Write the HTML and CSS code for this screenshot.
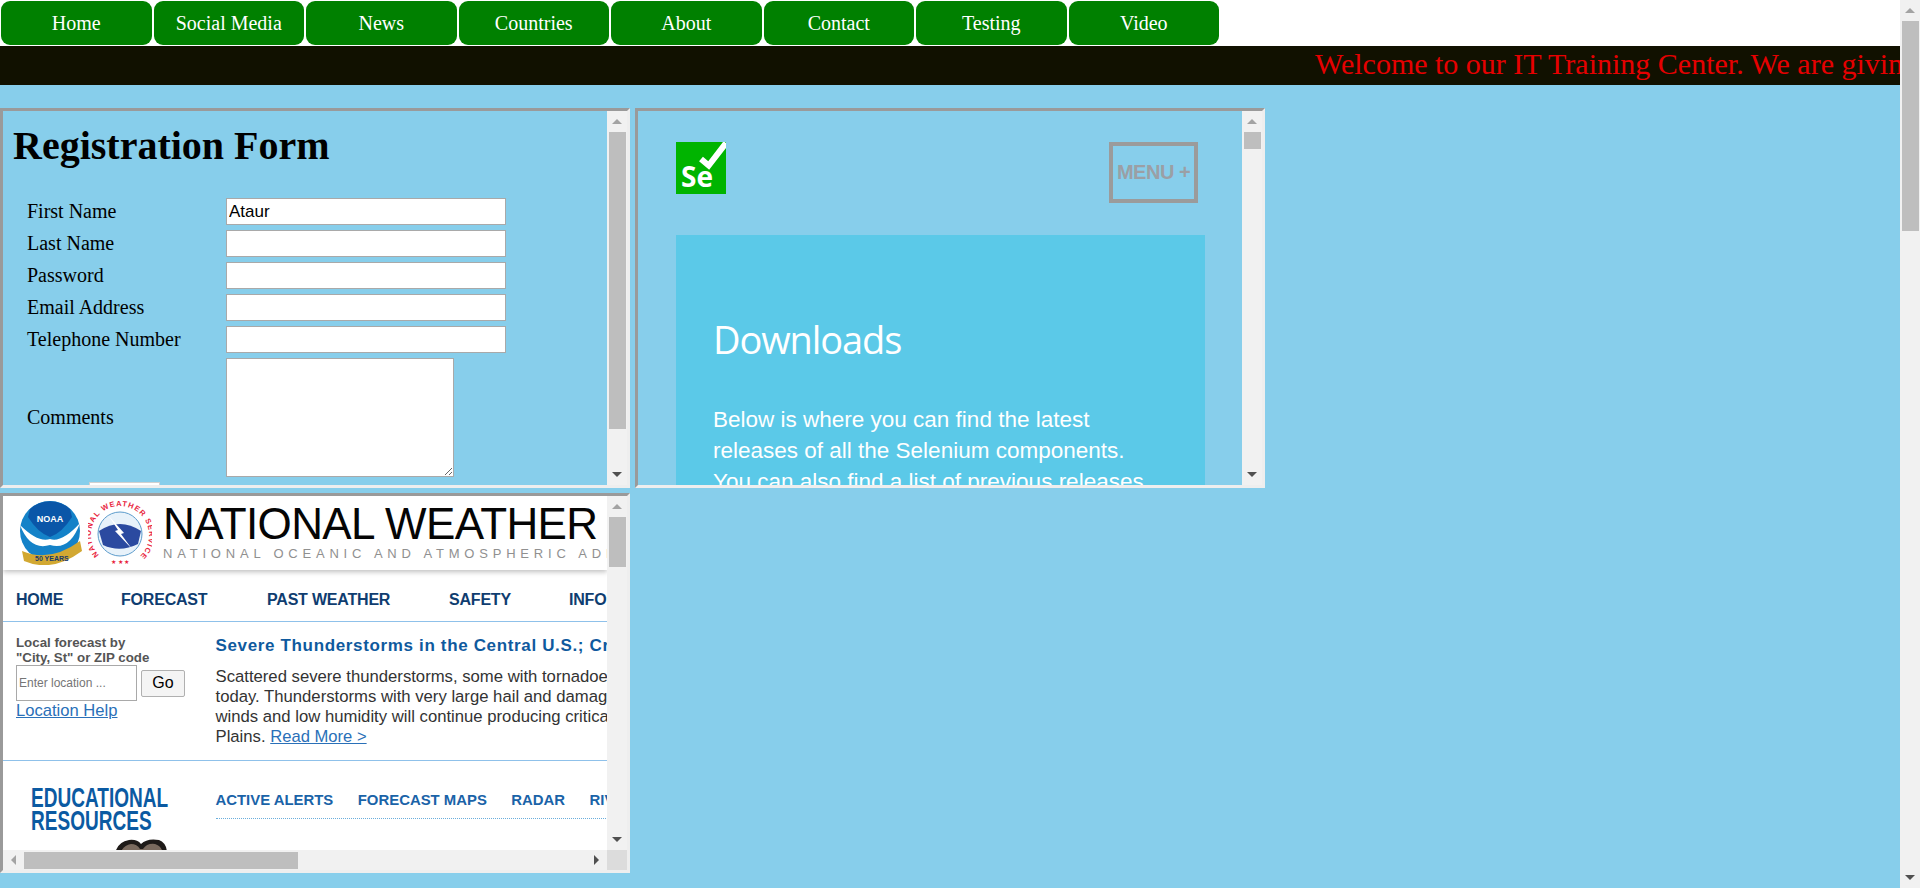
FILE: index.html
```html
<!DOCTYPE html>
<html>
<head>
    <title>IT Training Center</title>
    <link rel="stylesheet" href="styles.css">
</head>
<body>
    <div class="page">
        <ul class="nav">
            <li class="nav-item">Home</li>
            <li class="nav-item">Social Media</li>
            <li class="nav-item">News</li>
            <li class="nav-item">Countries</li>
            <li class="nav-item">About</li>
            <li class="nav-item">Contact</li>
            <li class="nav-item">Testing</li>
            <li class="nav-item">Video</li>
        </ul>
        <div class="ticker">
            <span class="ticker-text">Welcome to our IT Training Center. We are giving best training</span>
        </div>

        <div class="frames">
            <!-- registration form -->
            <div class="frame">
                <div class="frame-body form-doc">
                    <h1>Registration Form</h1>
                    <div class="form-grid">
                        <label>First Name</label>
                        <input class="field" type="text" value="Ataur">
                        <label>Last Name</label>
                        <input class="field" type="text">
                        <label>Password</label>
                        <input class="field" type="text">
                        <label>Email Address</label>
                        <input class="field" type="text">
                        <label>Telephone Number</label>
                        <input class="field" type="text">
                        <label>Comments</label>
                        <textarea class="comments"></textarea>
                    </div>
                    <div class="submit-stub"></div>
                </div>
                <div class="vbar">
                    <div class="arrow-box"><span class="arrow-up"></span></div>
                    <div class="thumb thumb-form"></div>
                    <div class="track"></div>
                    <div class="arrow-box"><span class="arrow-down"></span></div>
                </div>
            </div>

            <!-- selenium downloads -->
            <div class="frame">
                <div class="frame-body sel-doc">
                    <div class="sel-head">
                        <svg class="sel-logo" width="50" height="52" viewBox="0 0 50 52">
                            <rect width="50" height="52" fill="#00b400"/>
                            <path d="M25 17 L32.7 23.5 L50 1" fill="none" stroke="#fff" stroke-width="6"/>
                            <text x="5" y="45" class="sel-logo-text">Se</text>
                        </svg>
                        <div class="sel-menu">MENU +</div>
                    </div>
                    <div class="sel-box">
                        <h2>Downloads</h2>
                        <p>Below is where you can find the latest releases of all the Selenium components. You can also find a list of previous releases, source code, and additional information for Maven users.</p>
                    </div>
                </div>
                <div class="vbar">
                    <div class="arrow-box"><span class="arrow-up"></span></div>
                    <div class="thumb thumb-sel"></div>
                    <div class="track"></div>
                    <div class="arrow-box"><span class="arrow-down"></span></div>
                </div>
            </div>

            <!-- weather site -->
            <div class="frame frame-both">
                <div class="frame-body nws-doc">
                    <div class="nws-banner">
                        <svg class="nws-logo" width="64" height="64" viewBox="0 0 64 64">
                            <circle cx="30" cy="30" r="30" fill="#1482c8"/>
                            <path d="M10 8 A30 30 0 0 1 50 8 L52 16 Q42 32 30 36 Q18 32 8 16 Z" fill="#0a56a8"/>
                            <path d="M0 24 Q18 42 30 38 Q42 42 60 22 Q50 50 30 44 Q10 50 0 24 Z" fill="#fff"/>
                            <path d="M2 50 Q30 62 60 40 L62 50 Q32 72 4 60 Z" fill="#d2a832"/>
                            <text x="15" y="60" class="noaa-year">50 YEARS</text>
                            <text x="30" y="21" class="noaa-name">NOAA</text>
                        </svg>
                        <svg class="nws-logo" width="64" height="64" viewBox="0 0 64 64">
                            <defs>
                                <path id="ring" d="M11 54 A29 29 0 1 1 53 54"/>
                            </defs>
                            <circle cx="32" cy="33" r="31" fill="#fff"/>
                            <text class="nws-ring" textLength="136"><textPath href="#ring">NATIONAL WEATHER SERVICE</textPath></text>
                            <circle cx="32" cy="33" r="22" fill="#e8f2fa" stroke="#5c9ccc"/>
                            <path d="M11 30 Q32 16 53 30 L50 43 Q32 52 15 44 Z" fill="#2b4aa0"/>
                            <path d="M20 14 L30 29 L27 30 L44 48 L33 33 L36 32 Z" fill="#fff"/>
                            <text x="23" y="63" class="nws-stars">★ ★ ★</text>
                        </svg>
                        <div class="nws-title">
                            <div class="nws-big">NATIONAL WEATHER</div>
                            <div class="nws-small">NATIONAL OCEANIC AND ATMOSPHERIC ADMINISTRATION</div>
                        </div>
                    </div>
                    <div class="nws-menu">
                        <span class="m-home">HOME</span>
                        <span class="m-forecast">FORECAST</span>
                        <span class="m-past">PAST WEATHER</span>
                        <span class="m-safety">SAFETY</span>
                        <span class="m-info">INFORMATION</span>
                    </div>
                    <div class="nws-news">
                        <div class="nws-local">
                            <div class="local-label">Local forecast by<br>"City, St" or ZIP code</div>
                            <div class="local-form">
                                <input class="local-input" type="text" placeholder="Enter location ...">
                                <button class="local-go">Go</button>
                            </div>
                            <a class="nws-link" href="#">Location Help</a>
                        </div>
                        <div class="nws-story">
                            <div class="story-title">Severe Thunderstorms in the Central U.S.; Critical Fire Weather</div>
                            <div class="story-text">Scattered severe thunderstorms, some with tornadoes, are forecast<br>today. Thunderstorms with very large hail and damaging winds. Strong<br>winds and low humidity will continue producing critical fire weather<br>Plains. <a class="nws-link" href="#">Read More &gt;</a></div>
                        </div>
                    </div>
                    <div class="nws-lower">
                        <div class="edu">
                            <div class="edu-line">EDUCATIONAL</div>
                            <div class="edu-line">RESOURCES</div>
                            <svg class="edu-face" width="56" height="16" viewBox="0 0 56 16">
                                <path d="M2 16 Q4 4 16 2 Q24 1 28 6 Q34 0 46 2 Q54 5 54 16 Z" fill="#1e1a18"/>
                                <path d="M7 16 Q10 7 18 6 Q24 6 27 11 L30 11 Q34 5 42 6 Q49 8 50 16 Z" fill="#7a6a5e"/>
                            </svg>
                        </div>
                        <div class="tabs">
                            <span class="tab-item">ACTIVE ALERTS</span>
                            <span class="tab-item">FORECAST MAPS</span>
                            <span class="tab-item">RADAR</span>
                            <span class="tab-item">RIVERS, LAKES</span>
                        </div>
                    </div>
                </div>
                <div class="vbar">
                    <div class="arrow-box"><span class="arrow-up"></span></div>
                    <div class="thumb thumb-nws"></div>
                    <div class="track"></div>
                    <div class="arrow-box"><span class="arrow-down"></span></div>
                </div>
                <div class="hbar">
                    <div class="arrow-box-h"><span class="arrow-left"></span></div>
                    <div class="hthumb"></div>
                    <div class="track"></div>
                    <div class="arrow-box-h"><span class="arrow-right"></span></div>
                </div>
                <div class="corner"></div>
            </div>
        </div>
    </div>

    <div class="page-bar">
        <div class="arrow-box"><span class="arrow-up"></span></div>
        <div class="thumb thumb-page"></div>
        <div class="track"></div>
        <div class="arrow-box"><span class="arrow-down"></span></div>
    </div>
</body>
</html>
```

FILE: styles.css
```css
html, body {
    height: 100%;
    margin: 0;
    overflow: hidden;
}

body {
    display: flex;
    font-family: "Liberation Serif", "Times New Roman", serif;
    background-color: #fff;
}

.page {
    flex: 1;
    min-width: 0;
}

/* top menu */
.nav {
    display: flex;
    margin: 0;
    padding: 1px 0 1px 0;
    list-style: none;
}

.nav-item {
    width: 150.5px;
    height: 44px;
    margin: 0 1px;
    line-height: 44px;
    text-align: center;
    font-size: 20px;
    color: #fff;
    background-color: #008000;
    border-radius: 9px;
}

.ticker {
    height: 39px;
    overflow: hidden;
    padding-left: 1315px;
    white-space: nowrap;
    background-color: #111100;
}

.ticker-text {
    font-size: 30px;
    line-height: 35px;
    color: #e60000;
}

/* frames */
.frames {
    display: grid;
    grid-template-columns: 630px 630px;
    grid-template-rows: 380px 380px;
    gap: 5px;
    height: 803px;
    padding-top: 23px;
    box-sizing: border-box;
    background-color: #87ceeb;
}

.frame {
    display: grid;
    grid-template-columns: 1fr 20px;
    grid-template-rows: 374px;
    border-style: solid;
    border-width: 3px;
    border-color: #9a9a9a #eeeeee #eeeeee #9a9a9a;
}

.frame-both {
    grid-template-rows: 354px 20px;
}

.frame-body {
    overflow: hidden;
}

/* scrollbars */
.vbar, .page-bar {
    display: flex;
    flex-direction: column;
    width: 20px;
    background-color: #f1f1f1;
}

.page-bar {
    height: 888px;
}

.arrow-box {
    display: flex;
    align-items: center;
    justify-content: center;
    height: 21px;
    flex: none;
}

.arrow-up {
    border-left: 5px solid transparent;
    border-right: 5px solid transparent;
    border-bottom: 5px solid #a3a3a3;
}

.arrow-down {
    border-left: 5px solid transparent;
    border-right: 5px solid transparent;
    border-top: 5px solid #505050;
}

.thumb {
    width: 17px;
    margin-left: 2px;
    flex: none;
    background-color: #bebebe;
}

.thumb-form { height: 297px; }
.thumb-sel { height: 17px; }
.thumb-nws { height: 50px; }
.thumb-page { height: 210px; }

.track {
    flex: 1;
}

.hbar {
    display: flex;
    align-items: center;
    background-color: #f1f1f1;
}

.arrow-box-h {
    display: flex;
    align-items: center;
    justify-content: center;
    width: 21px;
    flex: none;
}

.arrow-left {
    border-top: 5px solid transparent;
    border-bottom: 5px solid transparent;
    border-right: 5px solid #a3a3a3;
}

.arrow-right {
    border-top: 5px solid transparent;
    border-bottom: 5px solid transparent;
    border-left: 5px solid #505050;
}

.hthumb {
    width: 274px;
    height: 17px;
    flex: none;
    background-color: #bebebe;
}

.corner {
    background-color: #dcdcdc;
}

/* registration form */
.form-doc {
    padding-left: 10px;
}

.form-doc h1 {
    margin: 0;
    padding-top: 12px;
    font-size: 40px;
    line-height: 46px;
}

.form-grid {
    display: grid;
    grid-template-columns: 199px 1fr;
    row-gap: 5px;
    align-items: center;
    justify-items: start;
    margin-top: 29px;
    padding-left: 14px;
    font-size: 20px;
}

.field {
    width: 280px;
    height: 27px;
    padding: 1px 2px;
    box-sizing: border-box;
    border: 1px solid #a9a9a9;
    font-family: "Liberation Sans", Arial, sans-serif;
    font-size: 17px;
}

.comments {
    display: block;
    width: 228px;
    height: 119px;
    padding: 2px;
    box-sizing: border-box;
    border: 1px solid #a9a9a9;
}

.submit-stub {
    width: 71px;
    height: 20px;
    margin: 5px 0 0 76px;
    border: 1px solid #d0d0d0;
    box-sizing: border-box;
    background-color: #fff;
}

/* selenium */
.sel-doc {
    padding: 31px 0 0 38px;
    width: 529px;
    font-family: "Liberation Sans", Arial, sans-serif;
}

.sel-head {
    display: flex;
    justify-content: space-between;
    align-items: flex-start;
    height: 93px;
    padding-right: 7px;
}

.sel-logo-text {
    font-family: "Open Sans", sans-serif;
    font-size: 28px;
    font-weight: 700;
    fill: #fff;
}

.sel-menu {
    width: 89px;
    height: 61px;
    box-sizing: border-box;
    border: 4px solid #9b9b9b;
    line-height: 53px;
    text-align: center;
    font-size: 20px;
    font-weight: bold;
    letter-spacing: -0.5px;
    color: #9b9fa5;
}

.sel-box {
    height: 260px;
    padding: 81px 40px 0 37px;
    box-sizing: border-box;
    color: #fff;
    background-color: #5bc9e8;
}

.sel-box h2 {
    margin: 0;
    font-family: "Open Sans", sans-serif;
    font-size: 38px;
    font-weight: 400;
    line-height: 46px;
    letter-spacing: -1.1px;
}

.sel-box p {
    margin: 42px 0 0 0;
    font-size: 22.5px;
    line-height: 31px;
}

/* weather site */
.nws-doc {
    width: 604px;
    font-family: "Liberation Sans", Arial, sans-serif;
    background-color: #fff;
}

.nws-banner {
    display: flex;
    align-items: flex-start;
    height: 74px;
    overflow: hidden;
    padding-left: 17px;
    box-shadow: 0 2px 5px rgba(0, 0, 0, 0.25);
    position: relative;
}

.nws-logo {
    flex: none;
    margin: 5px 4px 0 0;
}

.noaa-name {
    font-size: 9px;
    font-weight: bold;
    fill: #fff;
    text-anchor: middle;
}

.noaa-year {
    font-size: 7px;
    font-weight: bold;
    fill: #1a3a6a;
}

.nws-ring {
    font-size: 7.5px;
    font-weight: bold;
    fill: #e8243c;
}

.nws-stars {
    font-size: 6px;
    fill: #e8243c;
}

.nws-title {
    flex: none;
    width: 600px;
    margin-left: 7px;
    white-space: nowrap;
}

.nws-big {
    margin-top: 6px;
    font-size: 44px;
    line-height: 44px;
    letter-spacing: -0.6px;
    color: #050505;
}

.nws-small {
    margin-top: 1px;
    font-size: 13px;
    line-height: 14px;
    letter-spacing: 4.8px;
    color: #909090;
}

.nws-menu {
    display: flex;
    height: 52px;
    padding: 21px 0 0 13px;
    box-sizing: border-box;
    border-bottom: 1px solid #8fc1ea;
    white-space: nowrap;
    overflow: hidden;
    font-size: 16px;
    line-height: 18px;
    font-weight: bold;
    letter-spacing: -0.2px;
    color: #0f3d70;
}

.m-home, .m-forecast, .m-past, .m-safety, .m-info {
    flex: none;
}

.m-home { width: 105px; }
.m-forecast { width: 146px; }
.m-past { width: 182px; }
.m-safety { width: 120px; }

.nws-news {
    display: flex;
    height: 139px;
    box-sizing: border-box;
    border-bottom: 1px solid #8fc1ea;
    overflow: hidden;
}

.nws-local {
    flex: none;
    width: 212.5px;
    padding: 13px 0 0 13px;
    box-sizing: border-box;
}

.local-label {
    font-size: 13.3px;
    line-height: 15px;
    font-weight: bold;
    color: #555;
}

.local-form {
    display: flex;
    align-items: center;
    gap: 4px;
}

.local-input {
    width: 121px;
    height: 36px;
    padding: 0 2px;
    box-sizing: border-box;
    border: 1px solid #a9a9a9;
    font-family: "Liberation Sans", Arial, sans-serif;
    font-size: 12px;
}

.local-go {
    width: 44px;
    height: 27px;
    padding: 0;
    border: 1px solid #b0b0b0;
    border-radius: 2px;
    background-color: #f4f4f4;
    font-family: "Liberation Sans", Arial, sans-serif;
    font-size: 16px;
}

.nws-link {
    font-size: 16.6px;
    line-height: 20px;
    color: #2a70b8;
}

.nws-story {
    flex: none;
    width: 500px;
    padding-top: 14px;
    white-space: nowrap;
}

.story-title {
    font-size: 17px;
    line-height: 20px;
    font-weight: bold;
    letter-spacing: 0.65px;
    color: #0f5a9e;
}

.story-text {
    margin-top: 11px;
    font-size: 16.7px;
    line-height: 20px;
    color: #333;
}

.nws-lower {
    display: flex;
    height: 90px;
    overflow: hidden;
}

.edu {
    flex: none;
    width: 212.5px;
    padding: 25px 0 0 28px;
    box-sizing: border-box;
}

.edu-line {
    font-size: 28px;
    line-height: 23px;
    font-weight: bold;
    color: #0b5aa2;
    white-space: nowrap;
    transform: scaleX(0.68);
    transform-origin: left;
}

.edu-face {
    display: block;
    margin: 6px 0 0 82px;
}

.tabs {
    display: flex;
    flex: none;
    gap: 24.5px;
    width: 500px;
    height: 38px;
    margin-top: 20px;
    padding-top: 10px;
    box-sizing: border-box;
    border-bottom: 1px dotted #6aaedc;
    white-space: nowrap;
    font-size: 14.9px;
    line-height: 18px;
    font-weight: bold;
    color: #1a63a8;
}
```
